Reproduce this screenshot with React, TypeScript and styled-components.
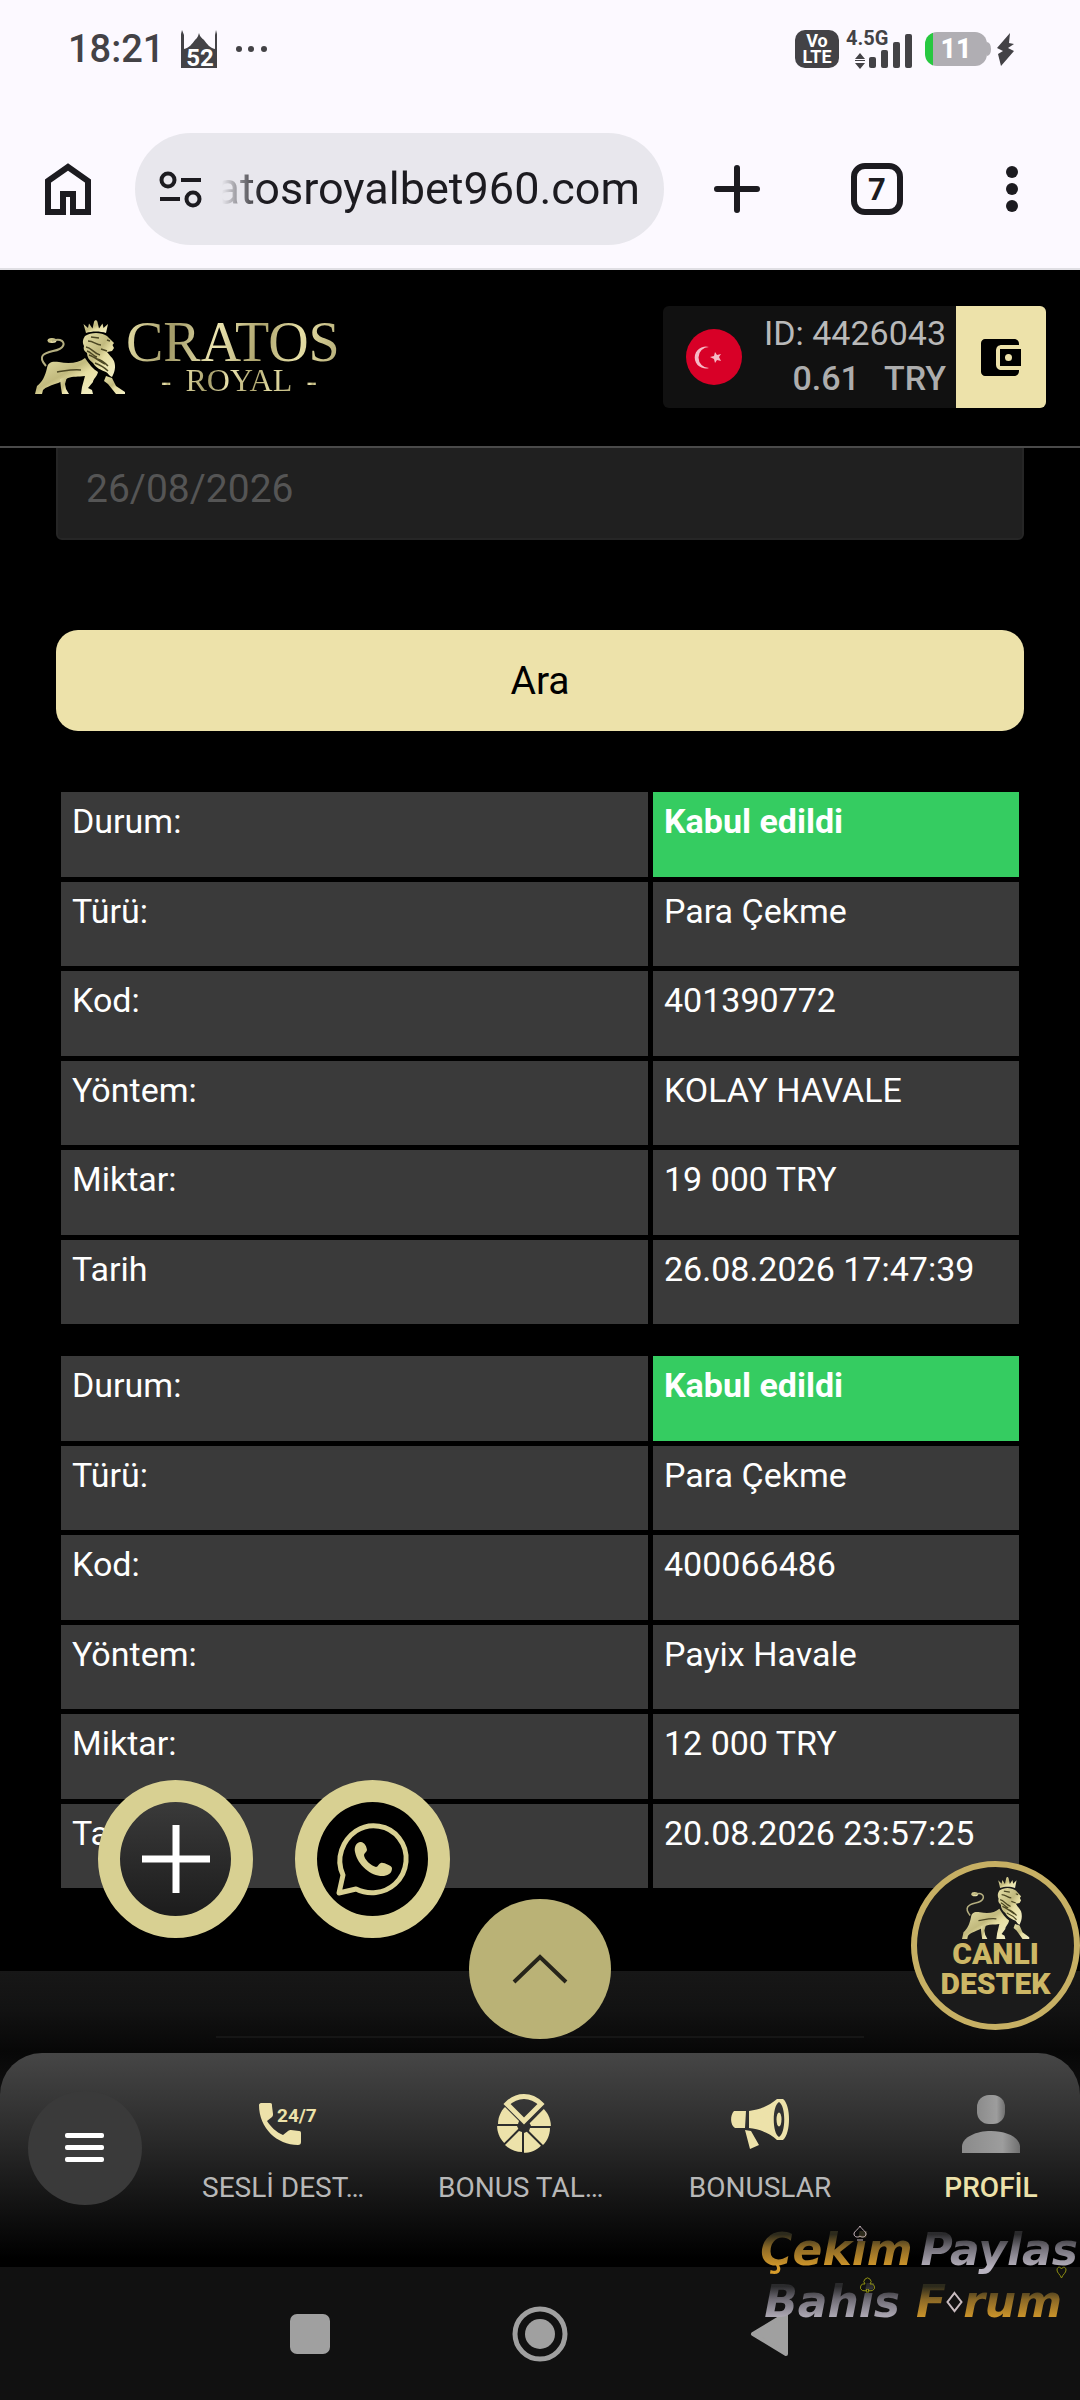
import React from "react";
import styled, { createGlobalStyle } from "styled-components";

const GOLD = "#ede2aa";
const RING = "#d8d092";
const INK = "#1c1b20";
const STATUS = "#434246";
const METAL = "linear-gradient(100deg, #e6dfa6 0%, #a39b68 22%, #ece5b0 42%, #aca36c 62%, #e6dfa6 80%, #b4ab76 100%)";

const GlobalStyle = createGlobalStyle`
  *, *::before, *::after { box-sizing: border-box; }
  body { margin: 0; background: #000; font-family: Roboto, "Liberation Sans", sans-serif; }
  button, input { font-family: inherit; border: 0; padding: 0; margin: 0; background: none; outline: none; }
  button { cursor: pointer; }
  svg { display: block; flex: none; overflow: visible; }
`;

const Page = styled.div`
  position: relative;
  display: flex;
  flex-direction: column;
  min-height: 100vh;
  overflow: hidden;
`;

/* ---------- Phone status bar ---------- */

const StatusBar = styled.header`
  display: flex;
  align-items: center;
  justify-content: space-between;
  height: 110px;
  padding: 0 66px 12px 68px;
  background: #fcf9ff;
  color: ${STATUS};
`;

const StatusGroup = styled.div<{ $gap: number }>`
  display: flex;
  align-items: center;
  gap: ${(p) => p.$gap}px;
`;

const Clock = styled.time`
  font-size: 38px;
  font-weight: 500;
  line-height: 40px;
`;

const VolteBadge = styled.span`
  display: flex;
  flex-direction: column;
  align-items: center;
  justify-content: center;
  width: 44px;
  height: 38px;
  border-radius: 10px;
  background: ${STATUS};
  color: #fff;
  font-size: 18px;
  font-weight: 700;
  line-height: 16px;
`;

const Battery = styled.span`
  display: flex;
  align-items: center;
  justify-content: center;
  width: 62px;
  height: 34px;
  border-radius: 12px;
  background: linear-gradient(90deg, #27c840 8px, #b0aeb3 8px);
  color: #fff;
  font-size: 27px;
  font-weight: 800;
  line-height: 34px;
`;

const BatteryGroup = styled.span`
  display: flex;
  align-items: center;
  margin-left: 5px;
`;

/* ---------- Browser bar ---------- */

const BrowserBar = styled.div`
  display: flex;
  align-items: center;
  height: 160px;
  padding: 0 27px 0 39px;
  border-bottom: 2px solid #e0dfe4;
  background: #fcf9ff;
`;

const BarButton = styled.button<{ $width: number }>`
  display: flex;
  align-items: center;
  justify-content: center;
  width: ${(p) => p.$width}px;
  height: 96px;
  color: ${INK};
`;

const AddressPill = styled.div`
  display: flex;
  align-items: center;
  flex: 1;
  min-width: 0;
  height: 112px;
  margin: 0 27px 0 38px;
  padding: 0 24px;
  gap: 20px;
  border-radius: 56px;
  background: #e8e7ed;
`;

const AddressFade = styled.div`
  display: flex;
  flex: 1;
  min-width: 0;
  justify-content: flex-end;
  overflow: hidden;
  mask-image: linear-gradient(90deg, transparent 0, #000 40px);
`;

const AddressInput = styled.input`
  flex: none;
  width: 480px;
  height: 64px;
  color: ${INK};
  font-size: 45px;
  line-height: 64px;
  text-align: right;
`;

const BarActions = styled.div`
  display: flex;
  align-items: center;
  gap: 46px;
`;

/* ---------- Site ---------- */

const Site = styled.div`
  position: relative;
  display: flex;
  flex-direction: column;
  flex: 1;
  background: #000;
`;

const SiteHeader = styled.header`
  position: relative;
  z-index: 1;
  display: flex;
  align-items: center;
  justify-content: space-between;
  height: 178px;
  padding: 0 34px 2px 35px;
  border-bottom: 2px solid #4a4a4a;
  background: #000;
`;

const Logo = styled.a`
  display: flex;
  align-items: center;
  text-decoration: none;
`;

const LogoWords = styled.span`
  display: flex;
  flex-direction: column;
  align-items: center;
  font-family: "Liberation Serif", serif;
`;

const LogoText = styled.span<{ $size: number; $line: number }>`
  background: ${METAL};
  background-clip: text;
  -webkit-background-clip: text;
  color: transparent;
  font-size: ${(p) => p.$size}px;
  line-height: ${(p) => p.$line}px;
`;

const LogoSecond = styled.span`
  display: flex;
  gap: 14px;
  padding-left: 12px;
`;

const Account = styled.div`
  display: flex;
  height: 102px;
  border-radius: 6px;
  overflow: hidden;
  background: #111;
`;

const AccountInfo = styled.div`
  display: flex;
  align-items: center;
  gap: 22px;
  padding: 0 10px 0 23px;
`;

const AccountLines = styled.div`
  display: flex;
  flex-direction: column;
  align-items: flex-end;
  padding-bottom: 3px;
  color: #b9b9b9;
  font-size: 34px;
  line-height: 45px;
`;

const Balance = styled.span`
  display: flex;
  gap: 24px;
  color: #adadad;
  font-weight: 500;
`;

const WalletButton = styled.button`
  display: flex;
  align-items: center;
  justify-content: center;
  width: 90px;
  background: ${GOLD};
`;

const Content = styled.main`
  display: flex;
  flex-direction: column;
  flex: 1;
  padding: 0 56px 78px;
`;

const DateInput = styled.input`
  width: 100%;
  height: 102px;
  margin-top: -10px;
  padding: 0 28px;
  border: 2px solid #262626;
  border-radius: 6px;
  background: #202020;
  color: #555;
  font-size: 39px;
`;

const SearchButton = styled.button`
  height: 101px;
  margin: 90px 0 56px;
  border-radius: 22px;
  background: ${GOLD};
  color: #000;
  font-size: 39px;
`;

const Records = styled.div`
  display: flex;
  flex-direction: column;
  gap: 22px;
`;

const RecordTable = styled.table`
  width: 100%;
  height: 542px;
  table-layout: fixed;
  border-collapse: separate;
  border-spacing: 5px;
  color: #fff;
  font-size: 34px;
  line-height: 40px;
`;

const LabelCell = styled.th`
  padding: 9px 11px;
  background: #3a3a3a;
  font-weight: 400;
  text-align: left;
  vertical-align: top;
`;

const ValueCell = styled.td<{ $accepted?: boolean }>`
  width: 366px;
  padding: 9px 11px;
  background: ${(p) => (p.$accepted ? "#35cc61" : "#3a3a3a")};
  font-weight: ${(p) => (p.$accepted ? 700 : 400)};
  vertical-align: top;
  white-space: nowrap;
`;

const Footer = styled.footer`
  display: flex;
  flex-direction: column;
  align-items: center;
  justify-content: flex-end;
  height: 124px;
  margin-bottom: -42px;
  padding-bottom: 57px;
  background: linear-gradient(#171717 0, #121212 40px, #070707 80px, #101010 100%);
`;

const FooterRule = styled.hr`
  width: 60%;
  height: 2px;
  margin: 0;
  border: 0;
  background: #161616;
`;

/* ---------- Floating buttons ---------- */

const RoundButtons = styled.div`
  position: absolute;
  left: 98px;
  bottom: 329px;
  display: flex;
  gap: 42px;
`;

const RoundButton = styled.button<{ $dark: string }>`
  display: flex;
  align-items: center;
  justify-content: center;
  width: 155px;
  height: 158px;
  border: 22px solid ${RING};
  border-radius: 50%;
  background: ${(p) => p.$dark};
`;

const TopButton = styled.button`
  position: absolute;
  left: 50%;
  bottom: 228px;
  display: flex;
  align-items: center;
  justify-content: center;
  width: 142px;
  height: 140px;
  margin-left: -71px;
  border-radius: 50%;
  background: #bab276;
`;

const SupportButton = styled.button`
  position: absolute;
  right: 0;
  bottom: 237px;
  display: flex;
  flex-direction: column;
  align-items: center;
  width: 169px;
  height: 169px;
  padding-top: 10px;
  border: 6px solid #c7b064;
  border-radius: 50%;
  background: #1b1b1b;
  color: #cdb766;
  font-size: 30px;
  font-weight: 900;
  line-height: 30px;
`;

/* ---------- Bottom navigation ---------- */

const BottomNav = styled.nav`
  position: relative;
  display: grid;
  grid-template-columns: 170fr 236fr 236fr 236fr 202fr;
  height: 214px;
  border-radius: 42px 42px 0 0;
  background: linear-gradient(#464646 0, #2a2a2a 40%, #0c0c0c 80%, #000 96%);
`;

const MenuButton = styled.button`
  display: flex;
  align-items: center;
  justify-content: center;
  width: 114px;
  height: 114px;
  margin: 38px 0 0 28px;
  border-radius: 50%;
  background: #3a3a3a;
`;

const NavLink = styled.a<{ $active?: boolean }>`
  display: flex;
  flex-direction: column;
  align-items: center;
  padding: 42px 0 0 ${(p) => (p.$active ? 24 : 0)}px;
  color: ${(p) => (p.$active ? GOLD : "#b8b8b8")};
  font-size: 28px;
  font-weight: ${(p) => (p.$active ? 500 : 400)};
  line-height: 32px;
  text-decoration: none;
  white-space: nowrap;
`;

const NavIcon = styled.span`
  display: flex;
  align-items: center;
  height: 58px;
  margin-bottom: 19px;
`;

const NavLabel = styled.span<{ $long?: boolean }>`
  width: 172px;
  text-align: ${(p) => (p.$long ? "left" : "center")};
`;

/* ---------- System keys ---------- */

const SystemBar = styled.div`
  display: flex;
  align-items: center;
  justify-content: center;
  gap: 174px;
  height: 133px;
  background: #111;
`;

const SystemKey = styled.button`
  display: flex;
  align-items: center;
  justify-content: center;
  width: 56px;
  height: 56px;
`;

/* ---------- Forum stamp ---------- */

const Stamp = styled.div`
  position: absolute;
  right: 2px;
  bottom: 72px;
  display: flex;
  flex-direction: column;
  align-items: flex-end;
  font-family: "DejaVu Sans", sans-serif;
  font-size: 44px;
  font-style: italic;
  font-weight: 700;
  line-height: 52px;
  pointer-events: none;
`;

const StampRow = styled.div<{ $inset?: boolean }>`
  position: relative;
  display: flex;
  align-items: center;
  gap: ${(p) => (p.$inset ? 16 : 8)}px;
  padding-right: ${(p) => (p.$inset ? 16 : 0)}px;
`;

const StampWord = styled.span<{ $gold?: boolean }>`
  display: flex;
  align-items: center;
  background: ${(p) =>
    p.$gold
      ? "linear-gradient(#2c2a1c 20%, #8a6826 45%, #d79c2b 85%)"
      : "linear-gradient(#2a2a2c 20%, #706d76 45%, #b9b4c0 85%)"};
  background-clip: text;
  -webkit-background-clip: text;
  color: transparent;
`;

const Suit = styled.svg<{ $right: number; $top: number }>`
  position: absolute;
  right: ${(p) => p.$right}px;
  top: ${(p) => p.$top}px;
`;

/* ---------- Drawings ---------- */

const Lion = ({ id, width, height }: { id: string; width: number; height: number }) => (
  <svg width={width} height={height} viewBox="0 0 91 74" preserveAspectRatio="none" aria-hidden="true">
    <defs>
      <linearGradient id={id} x1="0" y1="0" x2="1" y2="1">
        <stop offset="0" stopColor="#e6e0a8" />
        <stop offset="0.45" stopColor="#c2ba7e" />
        <stop offset="0.6" stopColor="#e6dea2" />
        <stop offset="1" stopColor="#f4f0c8" />
      </linearGradient>
    </defs>
    <g fill={`url(#${id})`}>
      <path d="M51 13 48.500 4l4.500 4 1-4.500 3.500 5L59 2c.5-2.500 3-2.500 3.500 0l1.500 6.500 3.500-5 1 4.500 4.500-4-2 9c-6-2-14-2-20 0Z" />
      <path d="M50 16c6-4 16-4 22 0l3 3 4 4-1.500 2 1.500 3-2 3-5 1c2 3 5 5 7 9 2 5 1 11-2 16-3-1-4-4-6-5-5-2-10-4-13-9-4-3-6-6-6-10-3-2-4-4-3-7-2-4-1-7 1-10Z" />
      <path d="M12 48c1-6 5-7 12-6 10 2 20 1 26-4 4 6 8 11 13 14-1 5-5 7-5 10l-5 6 4 2 1 4H46l1-7 3-11c-7 1-12 0-17 2-4 2-9 5-13 6-5 2-9 3-12 6l-1 4H0l2-8c5-4 8-9 10-18Z" />
      <path d="m25 59 7-2-2 7 1 5 3 5h-7l-1-6Z" />
      <path d="m71 56 6 2 4 8 9 6v2h-9l-8-10-4-3Z" />
      <ellipse cx="17" cy="20.500" rx="4.500" ry="2.500" />
    </g>
    <path d="M11 46C2 36 9 33 18 31c12-2 13-9 7-11-3-1-5 0-8 1" fill="none" stroke="#b5af80" strokeWidth="2" />
    <path d="M53 21c6 0 8 4 13 4M51 27c6 1 7 6 14 8M54 35c6 2 10 6 16 9M60 43c5 2 9 4 13 8M72 20l3 1M66 29l6 2M22 52c8-1 15-3 24-2M56 17l8 1M52 31c4 1 6 5 10 6M62 39c5 1 8 4 11 7" fill="none" stroke="#4d4824" strokeWidth="1.500" />
  </svg>
);

const MosqueIcon = () => (
  <svg width="37" height="38" viewBox="0 0 37 38">
    <path
      fill={STATUS}
      d="M0 38V4L1 0l2 5v14c5-1 8-5 11-9 2-2 3-3 4-7 1 4 3 5 5 7 3 4 6 8 11 9V5l1-5 1 4v34Z"
    />
    <text x="19" y="36" fill="#fff" fontSize="24" fontWeight="700" textAnchor="middle">52</text>
  </svg>
);

const MoreDots = () => (
  <svg width="33" height="8" viewBox="0 0 33 8" fill={STATUS}>
    <circle cx="4" cy="4" r="3" /><circle cx="16" cy="4" r="3" /><circle cx="29" cy="4" r="3" />
  </svg>
);

const SignalIcon = () => (
  <svg width="67" height="42" viewBox="0 0 67 42" fill={STATUS}>
    <text x="0" y="17" fontSize="20" fontWeight="700">4.5G</text>
    <path d="m14 25 5 6H9Zm0 16-5-6h10ZM9 32h10v1H9Z" />
    <rect x="23" y="29" width="7" height="11" rx="2" />
    <rect x="35" y="22" width="7" height="18" rx="2" />
    <rect x="47" y="14" width="7" height="26" rx="2" />
    <rect x="59" y="6" width="7" height="34" rx="2" />
  </svg>
);

const HomeIcon = () => (
  <svg width="46" height="52" viewBox="0 0 46 52">
    <path d="M3 18 23 4l20 14v31H28V31H18v18H3Z" fill="none" stroke={INK} strokeWidth="6" />
  </svg>
);

const TuneIcon = () => (
  <svg width="43" height="37" viewBox="0 0 43 37" fill="none" stroke={INK} strokeWidth="4">
    <circle cx="9" cy="9" r="6.500" /><path d="M22 9h20M1 28h20" /><circle cx="34" cy="28" r="6.500" />
  </svg>
);

const WalletIcon = () => (
  <svg width="40" height="37" viewBox="0 0 40 37">
    <path d="M4 0h29c3 0 5 2 5 5v1H21c-4 0-6 2-6 6v13c0 4 2 6 6 6h17v1c0 3-2 5-5 5H4c-2 0-4-2-4-4V4c0-2 2-4 4-4Z" />
    <path fillRule="evenodd" d="M19 10h21v17H19Zm8.500 5a3.500 3.500 0 1 0 0 7 3.500 3.500 0 0 0 0-7Z" />
  </svg>
);

const FlagIcon = () => (
  <svg width="56" height="56" viewBox="0 0 56 56" role="img" aria-label="Türkiye">
    <circle cx="28" cy="28" r="28" fill="#d80027" />
    <path d="M23 18a11 11 0 1 0 0 21 9 9 0 1 1 0-21Z" fill="#f6b9c5" />
    <path d="m29 23 2 3 4-1-2 3 2 4-4-1-2 3-1-4-4-2 4-1Z" fill="#f6b9c5" />
  </svg>
);

const WhatsappIcon = () => (
  <svg width="74" height="74" viewBox="0 0 74 74">
    <path
      d="M3 71 7 53C-1 36 7 18 20 9 34 0 53 3 63 16c11 14 9 34-4 46-11 10-27 11-39 5Z"
      fill="none"
      stroke={RING}
      strokeWidth="5"
      strokeLinejoin="round"
    />
    <path
      d="M24 20c-4 1-6 5-5 10 3 14 17 25 29 24 5-1 8-3 8-8 0-2-9-6-11-5-2 0-3 4-5 4-5-1-12-8-12-12 0-2 3-3 3-5 0-3-3-9-7-8Z"
      fill={RING}
    />
  </svg>
);

const CallIcon = () => (
  <svg width="58" height="42" viewBox="0 0 58 42" fill={GOLD}>
    <path d="M2 0h9c2 0 2 1 2 3l1 8c0 1 0 2-1 3l-5 4c4 6 9 11 16 14l5-4c1-1 2-1 3-1l8 1c2 0 2 1 2 3v8c0 2-1 3-3 3C18 42 0 25 0 2c0-1 1-2 2-2Z" />
    <text x="18" y="19" fontSize="19" fontWeight="700">24/7</text>
  </svg>
);

const WHEEL_ANGLES = [45, 90, 135, 180, 225, 270];

const WheelIcon = () => (
  <svg width="54" height="58" viewBox="0 0 54 58" fill={GOLD}>
    {WHEEL_ANGLES.map((a) => (
      <path key={a} transform={`rotate(${a} 27 31)`} d="M29 25 29 5c7 0 13 3 17 7L32 26Z" />
    ))}
    <path d="M10 9C20-1 34-1 44 9L27 26Z" fill="none" stroke={GOLD} strokeWidth="5" strokeLinejoin="miter" />
  </svg>
);

const HornIcon = () => (
  <svg width="58" height="50" viewBox="0 0 58 50" fill={GOLD}>
    <path d="M3 12h12l-1 17H4c-5-3-5-13-1-17ZM14 31l6 1 8 14-9 4Z" />
    <path fillRule="evenodd" d="M18 12C29 11 39 6 46 0h6c8 6 8 34 0 41h-6C39 34 28 30 18 29Zm30-9c-7 4-7 31 0 35 7-4 7-31 0-35Z" />
    <ellipse cx="48" cy="20.500" rx="2.500" ry="7" />
  </svg>
);

const PersonIcon = () => (
  <svg width="58" height="58" viewBox="0 0 58 58">
    <defs>
      <linearGradient id="person" x1="0" x2="1">
        <stop offset="0" stopColor="#8b8b8b" /><stop offset="0.7" stopColor="#9d9d9d" /><stop offset="1" stopColor="#707070" />
      </linearGradient>
    </defs>
    <rect x="15" y="0" width="28" height="29" rx="12" fill="url(#person)" />
    <path d="M0 58V51c1-9 14-15 29-15s28 6 29 15v7Z" fill="url(#person)" />
  </svg>
);

/* ---------- Data ---------- */

type RecordRow = { label: string; value: string; accepted?: boolean };

const RECORDS: RecordRow[][] = [
  [
    { label: "Durum:", value: "Kabul edildi", accepted: true },
    { label: "Türü:", value: "Para Çekme" },
    { label: "Kod:", value: "401390772" },
    { label: "Yöntem:", value: "KOLAY HAVALE" },
    { label: "Miktar:", value: "19 000 TRY" },
    { label: "Tarih", value: "26.08.2026 17:47:39" },
  ],
  [
    { label: "Durum:", value: "Kabul edildi", accepted: true },
    { label: "Türü:", value: "Para Çekme" },
    { label: "Kod:", value: "400066486" },
    { label: "Yöntem:", value: "Payix Havale" },
    { label: "Miktar:", value: "12 000 TRY" },
    { label: "Tarih", value: "20.08.2026 23:57:25" },
  ],
];

const NAV_ITEMS = [
  { label: "SESLİ DEST…", icon: <CallIcon />, long: true },
  { label: "BONUS TAL…", icon: <WheelIcon />, long: true },
  { label: "BONUSLAR", icon: <HornIcon /> },
  { label: "PROFİL", icon: <PersonIcon />, active: true },
];

export default function App() {
  return (
    <Page>
      <GlobalStyle />

      <StatusBar>
        <StatusGroup $gap={17}>
          <Clock>18:21</Clock>
          <MosqueIcon />
          <MoreDots />
        </StatusGroup>
        <StatusGroup $gap={7}>
          <VolteBadge><span>Vo</span><span>LTE</span></VolteBadge>
          <SignalIcon />
          <StatusGroup $gap={6}>
            <BatteryGroup>
              <Battery>11</Battery>
              <svg width="4" height="14" viewBox="0 0 4 14"><path d="M0 0q4 1 4 7t-4 7Z" fill="#b0aeb3" /></svg>
            </BatteryGroup>
            <svg width="17" height="33" viewBox="0 0 17 33" fill={STATUS}><path d="M13 0 0 15l6 3-5 3 3 12 13-15-6-3 6-4-5-1Z" /></svg>
          </StatusGroup>
        </StatusGroup>
      </StatusBar>

      <BrowserBar>
        <BarButton $width={58} aria-label="Ana sayfa"><HomeIcon /></BarButton>
        <AddressPill>
          <TuneIcon />
          <AddressFade>
            <AddressInput aria-label="Adres" defaultValue="atosroyalbet960.com" />
          </AddressFade>
        </AddressPill>
        <BarActions>
          <BarButton $width={92} aria-label="Yeni sekme">
            <svg width="46" height="48" viewBox="0 0 46 48" stroke={INK} strokeWidth="6" strokeLinecap="round"><path d="M23 3v42M3 24h40" /></svg>
          </BarButton>
          <BarButton $width={96} aria-label="Sekmeler">
            <svg width="52" height="52" viewBox="0 0 52 52">
              <rect x="3" y="3" width="46" height="46" rx="11" fill="none" stroke={INK} strokeWidth="6" />
              <text x="26" y="37" fill={INK} fontSize="31" fontWeight="700" textAnchor="middle">7</text>
            </svg>
          </BarButton>
          <BarButton $width={82} aria-label="Menü">
            <svg width="12" height="46" viewBox="0 0 12 46" fill={INK}><circle cx="6" cy="6" r="6" /><circle cx="6" cy="23" r="6" /><circle cx="6" cy="40" r="6" /></svg>
          </BarButton>
        </BarActions>
      </BrowserBar>

      <Site>
        <SiteHeader>
          <Logo href="#" aria-label="Cratos Royal">
            <Lion id="lionHeader" width={91} height={74} />
            <LogoWords>
              <LogoText $size={56} $line={46}>CRATOS</LogoText>
              <LogoSecond>
                <LogoText $size={32} $line={30}>-</LogoText>
                <LogoText $size={32} $line={30}>ROYAL</LogoText>
                <LogoText $size={32} $line={30}>-</LogoText>
              </LogoSecond>
            </LogoWords>
          </Logo>
          <Account>
            <AccountInfo>
              <FlagIcon />
              <AccountLines>
                <span>ID: 4426043</span>
                <Balance><span>0.61</span><span>TRY</span></Balance>
              </AccountLines>
            </AccountInfo>
            <WalletButton aria-label="Cüzdan"><WalletIcon /></WalletButton>
          </Account>
        </SiteHeader>

        <Content>
          <DateInput aria-label="Bitiş tarihi" defaultValue="26/08/2026" />
          <SearchButton>Ara</SearchButton>
          <Records>
            {RECORDS.map((rows, i) => (
              <RecordTable key={i}>
                <tbody>
                  {rows.map((row) => (
                    <tr key={row.label}>
                      <LabelCell scope="row">{row.label}</LabelCell>
                      <ValueCell $accepted={row.accepted}>{row.value}</ValueCell>
                    </tr>
                  ))}
                </tbody>
              </RecordTable>
            ))}
          </Records>
        </Content>

        <Footer><FooterRule /></Footer>

        <BottomNav>
          <MenuButton aria-label="Menü">
            <svg width="40" height="30" viewBox="0 0 40 30" fill="#fff"><rect width="39" height="5" rx="2" /><rect y="12" width="39" height="5" rx="2" /><rect y="24" width="39" height="5" rx="2" /></svg>
          </MenuButton>
          {NAV_ITEMS.map((item) => (
            <NavLink key={item.label} href="#" $active={item.active}>
              <NavIcon>{item.icon}</NavIcon>
              <NavLabel $long={item.long}>{item.label}</NavLabel>
            </NavLink>
          ))}
        </BottomNav>

        <RoundButtons>
          <RoundButton $dark="linear-gradient(#3a3a3a, #1c1c1c)" aria-label="Ekle">
            <svg width="68" height="68" viewBox="0 0 68 68" stroke="#fff" strokeWidth="7"><path d="M34 0v68M0 34h68" /></svg>
          </RoundButton>
          <RoundButton $dark="#000" aria-label="WhatsApp"><WhatsappIcon /></RoundButton>
        </RoundButtons>
        <TopButton aria-label="Yukarı çık">
          <svg width="56" height="30" viewBox="0 0 56 30" fill="none" stroke="#26241a" strokeWidth="4"><path d="M2 28 28 3l26 25" /></svg>
        </TopButton>
        <SupportButton>
          <Lion id="lionSupport" width={68} height={62} />
          <span>CANLI</span>
          <span>DESTEK</span>
        </SupportButton>
      </Site>

      <SystemBar>
        <SystemKey aria-label="Son uygulamalar">
          <svg width="40" height="40" viewBox="0 0 40 40"><rect width="40" height="40" rx="7" fill="#a0a0a0" /></svg>
        </SystemKey>
        <SystemKey aria-label="Ana ekran">
          <svg width="56" height="56" viewBox="0 0 56 56"><circle cx="28" cy="28" r="25" fill="none" stroke="#a0a0a0" strokeWidth="5" /><circle cx="28" cy="28" r="15" fill="#a0a0a0" /></svg>
        </SystemKey>
        <SystemKey aria-label="Geri">
          <svg width="40" height="46" viewBox="0 0 40 46"><path d="M3 23 36 3v40Z" fill="#a0a0a0" stroke="#a0a0a0" strokeWidth="4" strokeLinejoin="round" /></svg>
        </SystemKey>
      </SystemBar>

      <Stamp>
        <StampRow>
          <StampWord $gold>Çekim</StampWord>
          <StampWord>Paylas</StampWord>
          <Suit $right={211} $top={1} width="14" height="16" viewBox="0 0 14 16" fill="none" stroke="#c9b6bd"><path d="M7 1c2 4 6 5 6 8s-4 4-6 2c-2 2-6 1-6-2s4-4 6-8Zm-3 14h6" /></Suit>
          <Suit $right={11} $top={42} width="11" height="13" viewBox="0 0 11 13" fill="none" stroke="#8f9011"><path d="M5.500 12C4 8 1 7 1 4s3-4 4.500-1C7 0 10 1 10 4s-3 4-4.500 8Z" /></Suit>
        </StampRow>
        <StampRow $inset>
          <StampWord>Bahis</StampWord>
          <StampWord $gold>
            F
            <svg width="17" height="22" viewBox="0 0 17 22" fill="none" stroke="#c9bcc0" strokeWidth="2"><path d="m8.500 2 7 9-7 9-7-9Z" /></svg>
            rum
          </StampWord>
          <Suit $right={203} $top={1} width="15" height="16" viewBox="0 0 15 16" fill="none" stroke="#8f9011"><path d="M5 7a3.500 3.500 0 1 1 5 0 3.500 3.500 0 1 1-2 5l1 3H6l1-3a3.500 3.500 0 1 1-2-5Z" /></Suit>
        </StampRow>
      </Stamp>
    </Page>
  );
}
